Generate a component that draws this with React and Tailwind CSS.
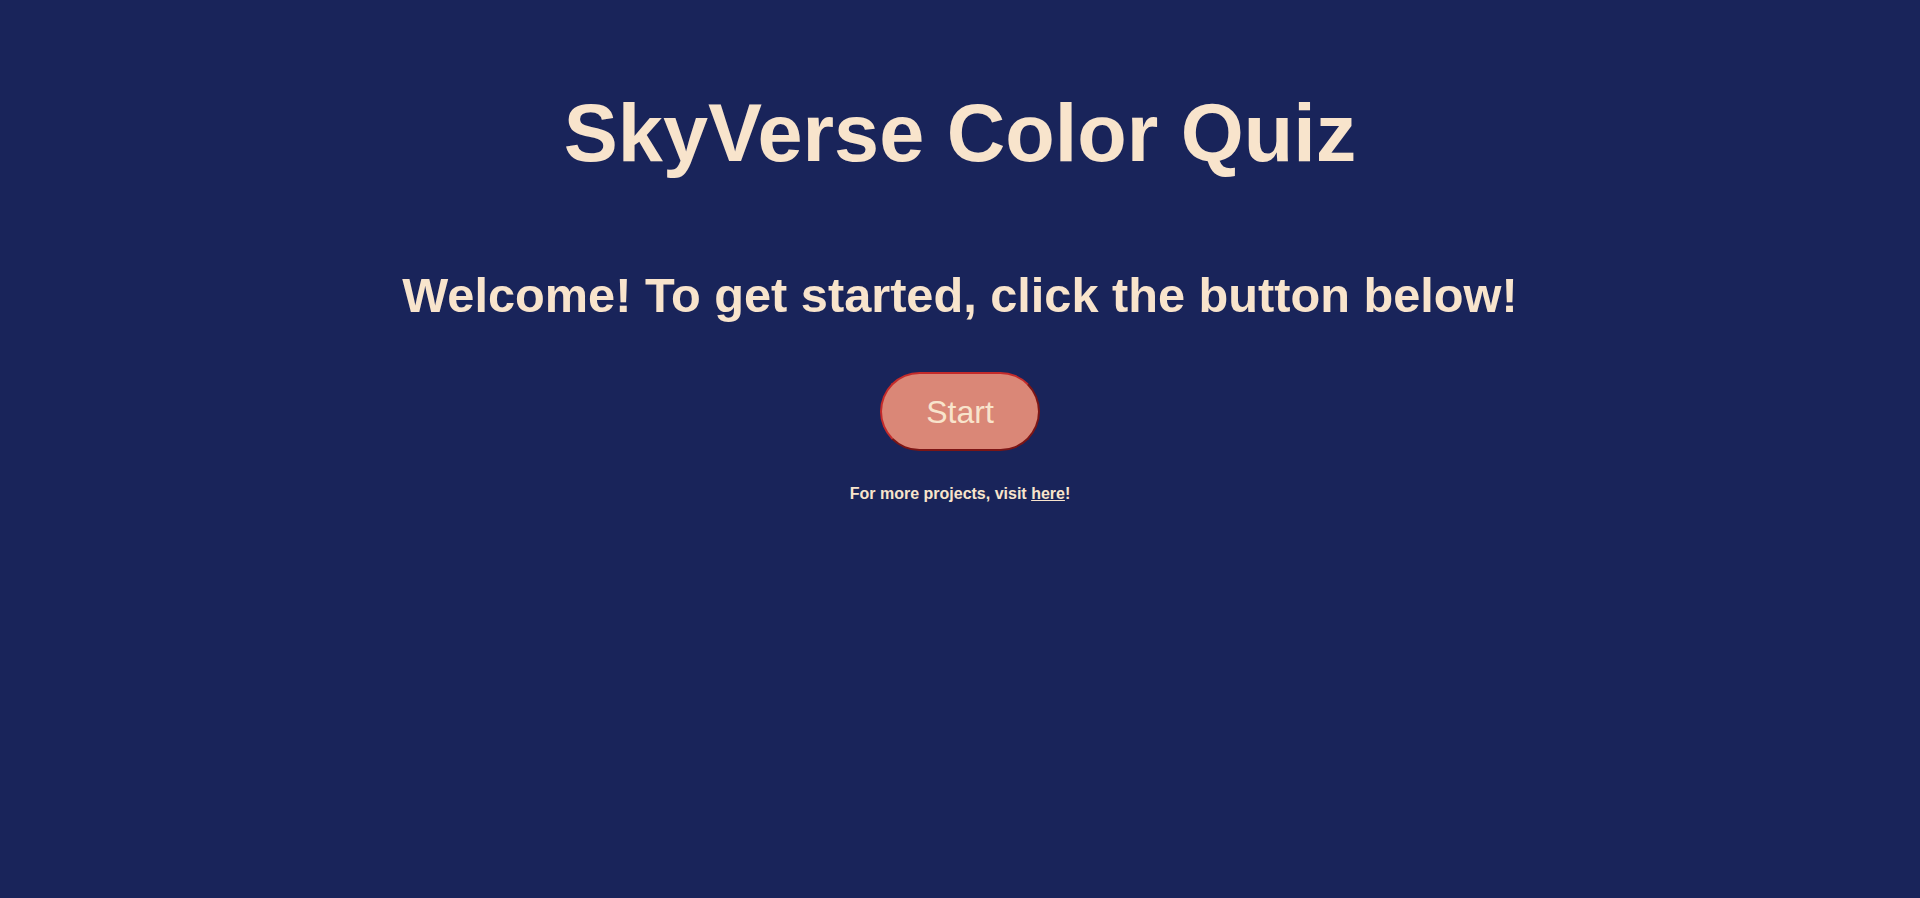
export default function App() {
  return (
    <div
      className="min-h-[898px] w-full bg-[#19245a] text-[#f8e4cc] flex flex-col items-center text-center"
      style={{ fontFamily: '"Liberation Sans", Arial, sans-serif' }}
    >
      <h1 className="mt-[87px] text-[81px] leading-[93px] font-bold">SkyVerse Color Quiz</h1>
      <h2 className="mt-[87px] text-[48.7px] leading-[56px] font-bold">
        Welcome! To get started, click the button below!
      </h2>
      <button className="mt-[49px] w-[160px] h-[79px] rounded-full bg-[#da8777] text-[32px] text-[#f8e4cc] border-2 border-t-[#c42a2a] border-l-[#c42a2a] border-b-[#7c1515] border-r-[#7c1515]">
        Start
      </button>
      <p className="mt-[34px] text-[16px] leading-[18px] font-bold">
        For more projects, visit <a href="#" className="underline">here</a>!
      </p>
    </div>
  );
}
